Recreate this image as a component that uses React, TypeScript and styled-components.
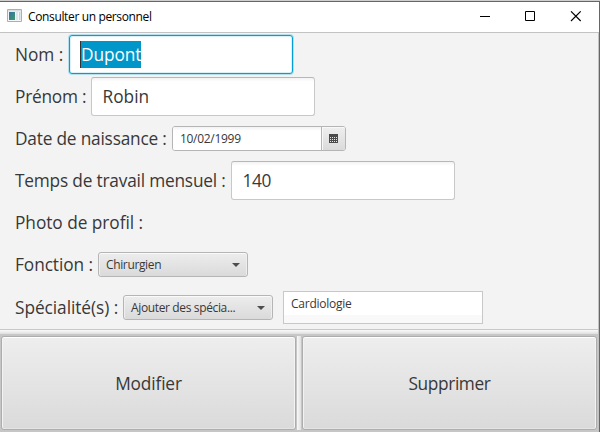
import React from 'react';
import styled, { createGlobalStyle, css } from 'styled-components';

const Global = createGlobalStyle`
  * { box-sizing: border-box; }
  body { margin: 0; overflow: hidden; }
`;

const Frame = styled.div`
  width: 600px;
  height: 432px;
  display: flex;
  flex-direction: column;
  background: #f3f3f3;
  border-top: 1px solid #cfcfcf;
  color: #383838;
  font-family: 'Open Sans', 'Noto Sans', sans-serif;
  font-size: 17.3px;
  line-height: 24px;
`;

const Window = styled.div`
  flex: 1;
  min-height: 0;
  display: flex;
  flex-direction: column;
  border-top: 1px solid #666;
  border-right: 1px solid #666;
`;

const TitleBar = styled.header`
  flex: none;
  height: 31px;
  display: flex;
  align-items: flex-start;
  background: #fff;
  border-bottom: 1px solid #c3c3c3;
`;

const AppIcon = styled.svg`
  margin: 7px 0 0 7px;
  display: block;
`;

const Title = styled.span`
  margin: 3px 0 0 6px;
  flex: 1;
  color: #000;
  font-size: 12px;
  line-height: 24px;
  letter-spacing: -0.36px;
`;

const Controls = styled.div`
  display: flex;
  gap: 34px;
  padding: 9px 17px 0 0;

  svg { display: block; }
`;

const Client = styled.main`
  flex: 1;
  min-height: 0;
  display: flex;
  flex-direction: column;
  border-right: 1px solid #c3c3c3;
`;

const Form = styled.section`
  height: 296px;
  padding: 1px 0 0 15px;
`;

const Row = styled.div<{ $last?: boolean }>`
  height: 42px;
  padding-bottom: 1px;
  display: flex;
  align-items: center;
  ${({ $last }) => $last && css`
    height: 43px;
    padding-top: 1px;
  `}
`;

const Label = styled.label<{ $width: number; $spacing: number }>`
  flex: none;
  width: ${({ $width }) => $width}px;
  white-space: nowrap;
  letter-spacing: ${({ $spacing }) => $spacing}px;
`;

const TextField = styled.div<{ $focused?: boolean; $spacing?: number }>`
  flex: none;
  width: 224px;
  height: 39px;
  padding: 0 10.5px;
  display: flex;
  align-items: center;
  border: 1px solid #c8c8c8;
  border-top-color: #b7b7b7;
  border-radius: 3px;
  background: linear-gradient(#f3f3f3, #fff 4px);
  letter-spacing: ${({ $spacing = 0 }) => $spacing}px;
  ${({ $focused }) => $focused && css`
    padding-left: 10px;
    border-color: #039ed3;
    background: #fff;
    box-shadow: 0 0 0 1px #b5dfed, inset 0 0 0 1px #d9f0f7;
  `}
`;

const Selection = styled.span`
  height: 27px;
  line-height: 27px;
  border-left: 1px solid #333;
  background: #0096c9;
  color: #fff;
`;

const DatePicker = styled.div`
  width: 174px;
  height: 25px;
  display: flex;
  border: 1px solid #b5b5b5;
  border-radius: 3px;
  overflow: hidden;
  background: #fff;
  font-size: 12px;
  line-height: 23px;
  letter-spacing: -0.3px;
`;

const DateValue = styled.span`
  flex: 1;
  padding-left: 7px;
  background: linear-gradient(#f3f3f3, #fff 4px);
`;

const CalendarButton = styled.span`
  width: 24px;
  display: flex;
  align-items: center;
  justify-content: center;
  border-left: 1px solid #b5b5b5;
  background: linear-gradient(#efefef, #dadada);
  box-shadow: inset 1px 1px 0 #f8f8f8;
`;

const Combo = styled.div`
  flex: none;
  width: 150px;
  height: 25px;
  padding: 0 7px;
  display: flex;
  align-items: center;
  justify-content: space-between;
  border: 1px solid #b5b5b5;
  border-radius: 3px;
  background: linear-gradient(#ededed, #dadada);
  box-shadow: inset 0 1px 0 #fafafa, inset 1px 0 0 #efefef, inset -1px 0 0 #efefef;
  font-size: 12px;
  line-height: 23px;
  letter-spacing: -0.36px;
`;

const ListBox = styled.div`
  width: 200px;
  height: 33px;
  margin-left: 10px;
  padding-left: 7px;
  border: 1px solid #c8c8c8;
  background: linear-gradient(#fff 23px, #f9f9f9 23px);
  font-size: 12px;
  line-height: 23px;
  letter-spacing: -0.24px;
`;

const HorizontalDivider = styled.div`
  flex: none;
  height: 5px;
  border-top: 1px solid #c8c8c8;
  background: linear-gradient(#fafafa, #dedede);
`;

const ActionBar = styled.footer`
  flex: 1;
  min-height: 0;
  display: flex;
  padding: 2px 1px;
  background: #c6c6c6;
`;

const ActionButton = styled.button<{ $spacing: number }>`
  width: 295px;
  padding: 2px 0 0;
  border: 1px solid #adadad;
  border-radius: 3px;
  background: linear-gradient(#eeeeee, #dadada);
  box-shadow: inset 0 1px 0 #fff, inset 1px 0 0 #f3f3f3, inset -1px 0 0 #f3f3f3, inset 0 -1px 0 #e4e4e4;
  color: #383838;
  font: inherit;
  letter-spacing: ${({ $spacing }) => $spacing}px;
`;

const VerticalDivider = styled.div`
  width: 4px;
  margin: 0 1px;
  background: linear-gradient(90deg, #f8f8f8, #e0e0e0);
`;

const Arrow = () => (
  <svg width="8" height="4" viewBox="0 0 8 4">
    <path d="M0 0h8L4 4z" fill="#4d4d4d" />
  </svg>
);

const Calendar = () => (
  <svg width="9" height="9" viewBox="0 0 9 9" shapeRendering="crispEdges">
    <path d="M0 0h9v9H0z" fill="#4a4a4a" />
    <path d="M1 3.5h7M1 5.5h7M1 7.5h7" stroke="#e5e5e5" strokeDasharray="1 1" />
  </svg>
);

export default function App() {
  return (
    <>
      <Global />
      <Frame>
        <Window>
          <TitleBar>
            <AppIcon width="15" height="14" viewBox="0 0 15 14">
              <defs>
                <linearGradient id="pane" x2="1" y2="1">
                  <stop stopColor="#3a6fa5" />
                  <stop offset="1" stopColor="#3d9a68" />
                </linearGradient>
              </defs>
              <path d="M.5.5h14v12H.5z" fill="#f4f6f7" stroke="#a9b0b5" />
              <path d="M1 1h13v1.5H1z" fill="#d9dde0" />
              <path d="M2 3h6v8H2z" fill="url(#pane)" />
              <path d="M9 3h2v8H9z" fill="#dce5e9" />
              <path d="M12 3h1.5v8H12z" fill="#cbd3d8" />
            </AppIcon>
            <Title>Consulter un personnel</Title>
            <Controls>
              <svg width="12" height="12" viewBox="0 0 12 12"><path d="M2 5.5h10" stroke="#000" /></svg>
              <svg width="12" height="12" viewBox="0 0 12 12"><path d="M1.5.5h9v9h-9z" fill="none" stroke="#000" /></svg>
              <svg width="12" height="12" viewBox="0 0 12 12"><path d="M1 .3l9.7 9.7M10.7.3L1 10" stroke="#000" strokeWidth="1.1" /></svg>
            </Controls>
          </TitleBar>
          <Client>
            <Form>
              <Row>
                <Label $width={54} $spacing={-0.05}>Nom :</Label>
                <TextField $focused $spacing={-0.1}><Selection>Dupont</Selection></TextField>
              </Row>
              <Row>
                <Label $width={76} $spacing={-0.25}>Prénom :</Label>
                <TextField>Robin</TextField>
              </Row>
              <Row>
                <Label $width={157} $spacing={-0.2}>Date de naissance :</Label>
                <DatePicker>
                  <DateValue>10/02/1999</DateValue>
                  <CalendarButton><Calendar /></CalendarButton>
                </DatePicker>
              </Row>
              <Row>
                <Label $width={216} $spacing={-0.2}>Temps de travail mensuel :</Label>
                <TextField $spacing={-0.4}>140</TextField>
              </Row>
              <Row>
                <Label $width={130} $spacing={-0.05}>Photo de profil :</Label>
              </Row>
              <Row>
                <Label $width={83} $spacing={-0.08}>Fonction :</Label>
                <Combo>Chirurgien<Arrow /></Combo>
              </Row>
              <Row $last>
                <Label $width={108} $spacing={-0.06}>Spécialité(s) :</Label>
                <Combo>Ajouter des spécia...<Arrow /></Combo>
                <ListBox>Cardiologie</ListBox>
              </Row>
            </Form>
            <HorizontalDivider />
            <ActionBar>
              <ActionButton $spacing={-0.15}>Modifier</ActionButton>
              <VerticalDivider />
              <ActionButton $spacing={-0.38}>Supprimer</ActionButton>
            </ActionBar>
          </Client>
        </Window>
      </Frame>
    </>
  );
}
